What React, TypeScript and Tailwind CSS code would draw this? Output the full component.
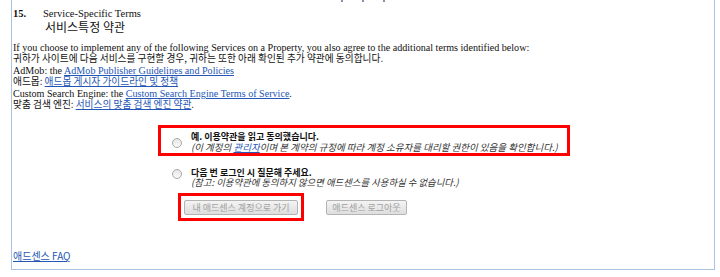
const serif = "font-['Liberation_Serif','Noto_Sans_CJK_KR',serif]";
const kr = "font-['Noto_Sans_CJK_KR',sans-serif]";

function Radio() {
  return (
    <span className="block w-[10px] h-[10px] rounded-full border border-[#a8a8a8] bg-gradient-to-b from-[#e6e6e6] to-[#fafafa]" />
  );
}

function LinkText({ children }: { children: React.ReactNode }) {
  return <a className="text-[#2456b5] underline">{children}</a>;
}

export default function App() {
  return (
    <div className="w-[720px] h-[277px] bg-white overflow-hidden relative">
      {/* clipped marks from above */}
      <div className="absolute top-0 left-[341px] flex gap-[19px]">
        <span className="block w-[2px] h-[2px] bg-[#8a8fb0]" />
        <span className="block w-[2px] h-[2px] bg-[#8a8fb0]" />
        <span className="block w-[2px] h-[2px] bg-[#8a8fb0]" />
      </div>

      <div className="ml-[11px] w-[704px] h-[270px] border-l border-r border-b border-[#a9c2df] pl-[1px] pt-[8px] text-[#111]">
        <div className={`${serif} text-[10.5px] leading-[12px] flex`}>
          <span className="w-[30px] font-bold">15.</span>
          <span>Service-Specific Terms</span>
        </div>
        <div className={`${kr} text-[12px] leading-[14px] pl-[32px]`}>서비스특정 약관</div>

        <div className="mt-[8px]">
          <div className={`${serif} text-[10.1px] leading-[11px] h-[11px]`}>
            If you choose to implement any of the following Services on a Property, you also agree to the additional terms identified below:
          </div>
          <div className={`${kr} text-[9.7px] leading-[11px] h-[11px]`}>
            귀하가 사이트에 다음 서비스를 구현할 경우, 귀하는 또한 아래 확인된 추가 약관에 동의합니다.
          </div>
          <div className={`${serif} text-[10.1px] leading-[11px] h-[11px] mt-[1px]`}>
            AdMob: the <LinkText>AdMob Publisher Guidelines and Policies</LinkText>
          </div>
          <div className={`${kr} text-[9.7px] leading-[11px] h-[11px]`}>
            애드몹: <LinkText>애드몹 게시자 가이드라인 및 정책</LinkText>
          </div>
          <div className={`${serif} text-[10.1px] leading-[11px] h-[11px] mt-[1px]`}>
            Custom Search Engine: the <LinkText>Custom Search Engine Terms of Service</LinkText>.
          </div>
          <div className={`${kr} text-[9.7px] leading-[11px] h-[11px]`}>
            맞춤 검색 엔진: <LinkText>서비스의 맞춤 검색 엔진 약관</LinkText>.
          </div>
        </div>

        <div className={`${kr} ml-[145px] mt-[15px] text-[9px]`}>
          <div className="w-[412px] h-[31px] border-[3px] border-[#ff0000] flex items-start pl-[11px] pt-[4px]">
            <div className="mt-[6px]"><Radio /></div>
            <div className="ml-[9px] leading-[10px]">
              <div className="font-bold text-[#111] h-[10px]">예. 이용약관을 읽고 동의했습니다.</div>
              <div className="italic text-[#333] text-[9.5px] h-[10px]">
                (이 계정의 <LinkText>관리자</LinkText>이며 본 계약의 규정에 따라 계정 소유자를 대리할 권한이 있음을 확인합니다.)
              </div>
            </div>
          </div>

          <div className="flex items-start pl-[14px] mt-[12px]">
            <div className="mt-[1px]"><Radio /></div>
            <div className="ml-[9px] leading-[9.5px]">
              <div className="font-bold text-[#111] h-[9.5px]">다음 번 로그인 시 질문해 주세요.</div>
              <div className="italic text-[#333] text-[9.4px] h-[9.5px]">(참고: 이용약관에 동의하지 않으면 애드센스를 사용하실 수 없습니다.)</div>
            </div>
          </div>

          <div className="flex items-center mt-[6px] ml-[20px]">
            <div className="border-[3px] border-[#ff0000] px-[3px] pt-[4px] pb-[3px]">
              <button disabled className="block w-[114px] h-[15px] border border-[#b4b4b4] bg-gradient-to-b from-[#f4f4f4] to-[#dedede] text-[#a0a0a0] text-[9px] leading-[13px] rounded-[2px]">
                내 애드센스 계정으로 가기
              </button>
            </div>
            <button disabled className="ml-[22px] block w-[81px] h-[15px] border border-[#b4b4b4] bg-gradient-to-b from-[#f4f4f4] to-[#dedede] text-[#a0a0a0] text-[9px] leading-[13px] rounded-[2px]">
              애드센스 로그아웃
            </button>
          </div>
        </div>

        <div className={`${kr} mt-[29px] text-[10px] leading-[12px]`}>
          <LinkText>애드센스 FAQ</LinkText>
        </div>
      </div>
    </div>
  );
}
